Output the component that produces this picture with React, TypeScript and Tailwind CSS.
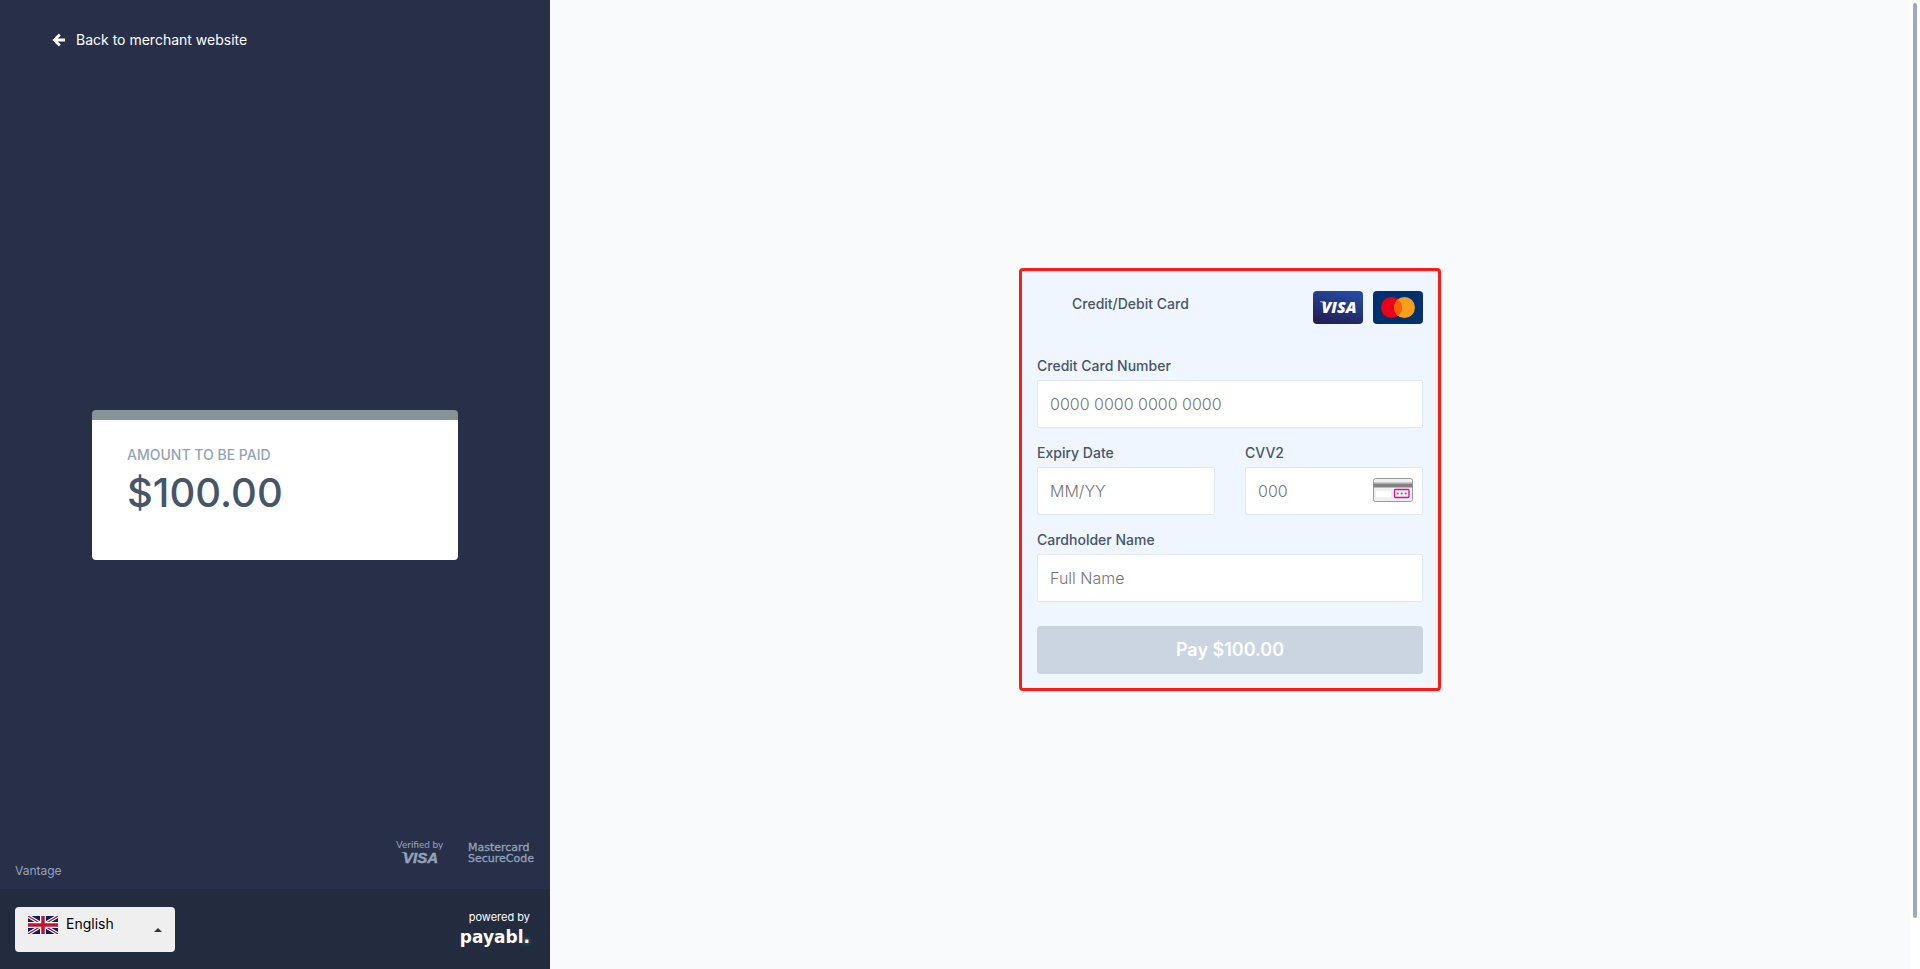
import { useState } from 'react'
import type { InputHTMLAttributes, ReactNode } from 'react'

interface FieldProps extends InputHTMLAttributes<HTMLInputElement> {
  id: string
  label: string
  icon?: ReactNode
}

function Field({ id, label, icon, ...props }: FieldProps) {
  return (
    <div className="flex flex-1 min-w-0 flex-col gap-1">
      <label htmlFor={id} className="text-sm font-medium text-[#475569]">
        {label}
      </label>
      <div className="relative">
        <input
          id={id}
          className="block h-12 w-full rounded-[2px] border border-[#e2e8f0] bg-white px-3 text-base font-light text-slate-700 placeholder:text-[#757575] outline-none focus:border-blue-400"
          {...props}
        />
        {icon && <span className="absolute right-2.5 top-[11px]">{icon}</span>}
      </div>
    </div>
  )
}

function ArrowLeft() {
  return (
    <svg width="14" height="14" viewBox="0 0 14 14" fill="none" stroke="currentColor" strokeWidth="2.8" aria-hidden="true">
      <path d="M2.200 7H13M7.800 1.600L2.400 7L7.800 12.400" />
    </svg>
  )
}

function VisaCard() {
  return (
    <svg width="50" height="33" viewBox="0 0 50 33" role="img" aria-label="Visa">
      <defs>
        <linearGradient id="visa-bg" x1="0.3" y1="1" x2="0.7" y2="0">
          <stop offset="0" stopColor="#221f54" />
          <stop offset="1" stopColor="#254aa5" />
        </linearGradient>
      </defs>
      <rect width="50" height="33" rx="4" fill="url(#visa-bg)" />
      <text x="26" y="22" textAnchor="middle" fill="#fff" fontFamily="Open Sans, sans-serif" fontSize="16" fontWeight="800" fontStyle="italic">VISA</text>
      <path d="M7 10.600h5l1.200 3C11.500 12 9.500 11.100 7 10.900z" fill="#fff" />
    </svg>
  )
}

function MastercardCard() {
  return (
    <svg width="50" height="33" viewBox="0 0 50 33" role="img" aria-label="Mastercard">
      <rect width="50" height="33" rx="4" fill="#00306e" />
      <circle cx="18.500" cy="16.500" r="10.500" fill="#eb001b" />
      <circle cx="31.500" cy="16.500" r="10.500" fill="#f79e1b" />
      <path d="M25 8.250a10.500 10.500 0 0 1 0 16.500a10.500 10.500 0 0 1 0-16.500z" fill="#ff5f00" />
    </svg>
  )
}

function CvvIcon() {
  return (
    <svg width="40" height="24" viewBox="0 0 40 24" aria-hidden="true">
      <rect x="0.5" y="0.5" width="39" height="23" rx="2" fill="#f0f0f0" stroke="#999" />
      <path d="M0.500 5.500h39v4h-39z" fill="#828282" />
      <path d="M0.500 5h39" stroke="#a3a3a3" />
      <path d="M3 13h15v6H3z" fill="#fff" />
      <rect x="21.500" y="11.500" width="14.500" height="8" rx="1" fill="#f4eef2" stroke="#d9138f" strokeWidth="1.300" />
      <circle cx="24.700" cy="15.500" r="1.100" fill="#777" />
      <circle cx="28.700" cy="15.500" r="1.100" fill="#777" />
      <circle cx="32.700" cy="15.500" r="1.100" fill="#777" />
    </svg>
  )
}

function UkFlag() {
  return (
    <svg width="30" height="18" viewBox="0 0 60 36" preserveAspectRatio="none" aria-hidden="true">
      <rect width="60" height="36" fill="#012169" />
      <path d="M0 0L60 36M60 0L0 36" stroke="#fff" strokeWidth="7" />
      <path d="M0 0L60 36M60 0L0 36" stroke="#c8102e" strokeWidth="2.500" />
      <path d="M30 0V36M0 18H60" stroke="#fff" strokeWidth="12" />
      <path d="M30 0V36M0 18H60" stroke="#c8102e" strokeWidth="7" />
    </svg>
  )
}

function VerifiedByVisa() {
  return (
    <svg width="50" height="26" viewBox="0 0 50 26" fill="#94a3b8" role="img" aria-label="Verified by Visa">
      <text x="2" y="9" fontFamily="Lato, sans-serif" fontSize="10">Verified by</text>
      <text x="9" y="24" fontFamily="Liberation Sans, sans-serif" fontSize="15" fontWeight="700" fontStyle="italic" stroke="#94a3b8" strokeWidth="0.5">VISA</text>
      <path d="M7.500 13.100h4l1.200 3.400C11.500 14.600 10 13.700 7.500 13.400z" />
    </svg>
  )
}

function MastercardSecureCode() {
  return (
    <svg width="67" height="26" viewBox="0 0 67 26" fill="#94a3b8" stroke="#94a3b8" strokeWidth="0.300" fontFamily="DejaVu Sans, sans-serif" fontSize="11" role="img" aria-label="Mastercard SecureCode">
      <text x="0" y="12">Mastercard</text>
      <text x="0" y="23">SecureCode</text>
    </svg>
  )
}

function Sidebar() {
  const [language, setLanguage] = useState('English')

  return (
    <aside className="grid w-[550px] shrink-0 grid-rows-[1fr_auto_1fr] bg-[#282f49]">
      <div className="px-[52px] pt-[30px]">
        <a href="#" className="flex w-fit items-center gap-2.5 text-sm text-white">
          <ArrowLeft />
          Back to merchant website
        </a>
      </div>

      {/* Amount */}
      <div className="mx-[92px] mt-px min-h-[150px] rounded border-t-10 border-[#869397] bg-white px-[35px] pt-[25px]">
        <div className="text-sm font-medium uppercase text-[#94a3b8]">Amount to be paid</div>
        <div className="text-[40px] leading-[56px] font-medium text-[#475569]">$100.00</div>
      </div>

      <div className="flex flex-col justify-end">
        <div className="flex items-end justify-between px-[15px] pb-2">
          <span className="text-xs leading-5 text-[#94a3b8]">Vantage</span>
          <div className="flex gap-6 pb-4">
            <VerifiedByVisa />
            <MastercardSecureCode />
          </div>
        </div>

        {/* Footer bar */}
        <div className="flex h-20 items-start justify-between bg-[#232b3f] pr-5 pl-[15px] pt-[18px]">
          <div className="relative">
            <select
              aria-label="Language"
              value={language}
              onChange={(e) => setLanguage(e.target.value)}
              className="block h-[45px] w-40 appearance-none rounded bg-[#efefef] pb-3 pl-[51px] text-sm text-black"
            >
              <option>English</option>
              <option>Deutsch</option>
              <option>Français</option>
            </select>
            <span className="pointer-events-none absolute left-[13px] top-[9px]">
              <UkFlag />
            </span>
            <svg width="8" height="4" viewBox="0 0 8 4" className="pointer-events-none absolute right-[13px] top-[21px]" aria-hidden="true">
              <path d="M0 4L4 0L8 4z" fill="#333" />
            </svg>
          </div>
          <div className="flex flex-col items-end text-white">
            <span className="text-[11px] leading-5">powered by</span>
            <span className="text-[17px] leading-5 font-bold font-['DejaVu_Sans',sans-serif]">
              payabl<span className="[text-shadow:0_0_4px_#22d3ee]">.</span>
            </span>
          </div>
        </div>
      </div>
    </aside>
  )
}

function PaymentForm() {
  return (
    <form
      onSubmit={(e) => e.preventDefault()}
      className="w-[422px] rounded-[4px] border-3 border-[#ff1b10] bg-[#eff6ff] px-[15px] pt-5 pb-[14px]"
    >
      <div className="flex items-start justify-between pl-[35px]">
        <h1 className="pt-[3px] text-sm font-medium text-[#475569]">Credit/Debit Card</h1>
        <div className="flex gap-2.5">
          <VisaCard />
          <MastercardCard />
        </div>
      </div>

      <div className="mt-8 flex flex-col gap-[15px]">
        <Field id="card-number" label="Credit Card Number" placeholder="0000 0000 0000 0000" inputMode="numeric" />
        <div className="flex gap-[30px]">
          <Field id="expiry" label="Expiry Date" placeholder="MM/YY" />
          <Field id="cvv" label="CVV2" placeholder="000" icon={<CvvIcon />} />
        </div>
        <Field id="holder" label="Cardholder Name" placeholder="Full Name" />
      </div>

      <button type="submit" disabled className="mt-6 h-12 w-full rounded bg-[#cbd5e1] text-lg font-semibold text-white">
        Pay $100.00
      </button>
    </form>
  )
}

export default function App() {
  return (
    <div className="flex min-h-screen bg-white font-['Inter',sans-serif]">
      <Sidebar />
      <main className="flex flex-1 items-center justify-center bg-[#f8fafc] pb-[10px]">
        <PaymentForm />
      </main>

      {/* Scroll track */}
      <div className="flex w-2.5 shrink-0 flex-col px-[3px] pt-[3px] pb-[51px]">
        <div className="flex-1 rounded-[2px] bg-[#a2a8c0]" />
      </div>
    </div>
  )
}
